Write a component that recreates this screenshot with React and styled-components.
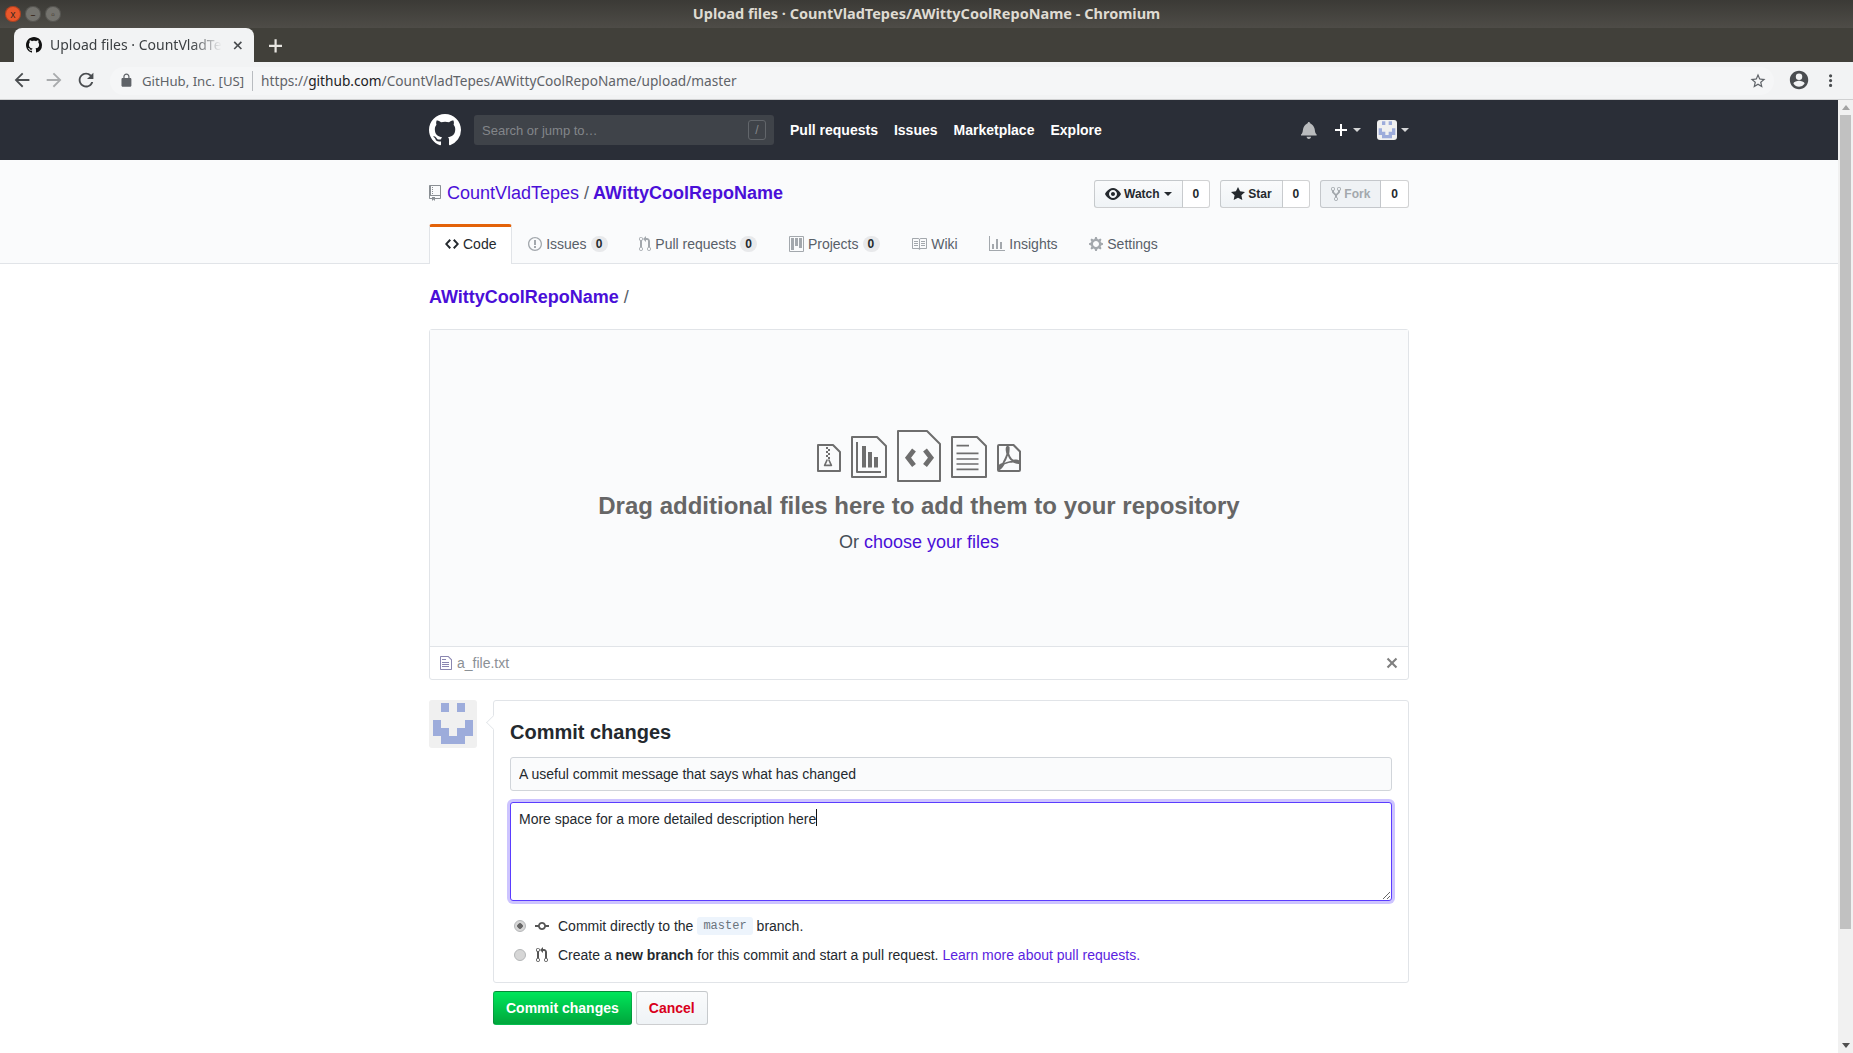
import React from "react";
import styled, { createGlobalStyle } from "styled-components";

const GlobalStyle = createGlobalStyle`
  html, body {
    margin: 0;
    height: 100%;
    overflow: hidden;
    background: #fff;
  }
  * {
    box-sizing: border-box;
  }
`;

const UI_FONT = `"Liberation Sans", Arial, sans-serif`;
const SYSTEM_FONT = `"Noto Sans", Roboto, sans-serif`;
const LINK = "#4a0fd8";

const paths = {
  mark: "M8 0C3.58 0 0 3.58 0 8c0 3.54 2.29 6.53 5.47 7.59.4.07.55-.17.55-.38 0-.19-.01-.82-.01-1.49-2.01.37-2.53-.49-2.69-.94-.09-.23-.48-.94-.82-1.13-.28-.15-.68-.52-.01-.53.63-.01 1.08.58 1.23.82.72 1.21 1.87.87 2.33.66.07-.52.28-.87.51-1.07-1.78-.2-3.64-.89-3.64-3.95 0-.87.31-1.59.82-2.15-.08-.2-.36-1.02.08-2.12 0 0 .67-.21 2.2.82.64-.18 1.32-.27 2-.27.68 0 1.36.09 2 .27 1.53-1.04 2.2-.82 2.2-.82.44 1.1.16 1.92.08 2.12.51.56.82 1.27.82 2.15 0 3.07-1.87 3.75-3.65 3.95.29.25.54.73.54 1.48 0 1.07-.01 1.93-.01 2.2 0 .21.15.46.55.38A8.013 8.013 0 0016 8c0-4.42-3.58-8-8-8z",
  repo: "M4 9H3V8h1v1zm0-3H3v1h1V6zm0-2H3v1h1V4zm0-2H3v1h1V2zm8-1v12c0 .55-.45 1-1 1H6v2l-1.5-1.5L3 16v-2H1c-.55 0-1-.45-1-1V1c0-.55.45-1 1-1h10c.55 0 1 .45 1 1zm-1 10H1v2h2v-1h3v1h5v-2zm0-10H2v9h9V1z",
  code: "M9.5 3L8 4.5 11.5 8 8 11.5 9.5 13 14 8 9.5 3zm-5 0L0 8l4.5 5L6 11.5 2.5 8 6 4.5 4.5 3z",
  issue: "M7 2.3c3.14 0 5.7 2.56 5.7 5.7s-2.56 5.7-5.7 5.7A5.71 5.71 0 011.3 8c0-3.14 2.56-5.7 5.7-5.7zM7 1C3.14 1 0 4.14 0 8s3.14 7 7 7 7-3.14 7-7-3.14-7-7-7zm1 3H6v5h2V4zm0 6H6v2h2v-2z",
  pull: "M11 11.28V5c-.03-.78-.34-1.47-.94-2.06C9.46 2.35 8.78 2.03 8 2H7V0L4 3l3 3V4h1c.27.02.48.11.69.31.21.2.3.42.31.69v6.28A1.993 1.993 0 0010 15a1.993 1.993 0 001-3.72zm-1 2.92c-.66 0-1.2-.55-1.2-1.2 0-.65.55-1.2 1.2-1.2.65 0 1.2.55 1.2 1.2 0 .65-.55 1.2-1.2 1.2zM4 3c0-1.11-.89-2-2-2a1.993 1.993 0 00-1 3.72v6.56A1.993 1.993 0 002 15a1.993 1.993 0 001-3.72V4.72c.59-.34 1-.98 1-1.72zm-.8 10c0 .66-.55 1.2-1.2 1.2-.65 0-1.2-.55-1.2-1.2 0-.65.55-1.2 1.2-1.2.65 0 1.2.55 1.2 1.2zM2 4.2C1.34 4.2.8 3.65.8 3c0-.65.55-1.2 1.2-1.2.65 0 1.2.55 1.2 1.2 0 .65-.55 1.2-1.2 1.2z",
  project: "M10 12h3V2h-3v10zm-4-2h3V2H6v8zm-4 4h3V2H2v12zm-1 1h13V1H1v14zM14 0H1a1 1 0 00-1 1v14a1 1 0 001 1h13a1 1 0 001-1V1a1 1 0 00-1-1z",
  book: "M3 5h4v1H3V5zm0 3h4V7H3v1zm0 2h4V9H3v1zm11-5h-4v1h4V5zm0 2h-4v1h4V7zm0 2h-4v1h4V9zm2-6v9c0 .55-.45 1-1 1H9.5l-1 1-1-1H2c-.55 0-1-.45-1-1V3c0-.55.45-1 1-1h5.5l1 1 1-1H15c.55 0 1 .45 1 1zm-8 .5L7.5 3H2v9h6V3.5zm7-.5H9.5l-.5.5V12h6V3z",
  graph: "M16 14v1H0V0h1v14h15zM5 13H3V8h2v5zm4 0H7V3h2v10zm4 0h-2V6h2v7z",
  gear: "M14 8.77v-1.6l-1.94-.64-.45-1.09.88-1.84-1.13-1.13-1.81.91-1.09-.45-.69-1.92h-1.6l-.63 1.94-1.11.45-1.84-.88-1.13 1.13.91 1.81-.45 1.09L0 7.23v1.59l1.94.64.45 1.09-.88 1.84 1.13 1.13 1.81-.91 1.09.45.69 1.92h1.59l.63-1.94 1.11-.45 1.84.88 1.13-1.13-.92-1.81.47-1.09L14 8.75v.02zM7 11c-1.66 0-3-1.34-3-3s1.34-3 3-3 3 1.34 3 3-1.34 3-3 3z",
  eye: "M8.06 2C3 2 0 8 0 8s3 6 8.06 6C13 14 16 8 16 8s-3-6-7.94-6zM8 12c-2.2 0-4-1.78-4-4 0-2.2 1.8-4 4-4 2.22 0 4 1.8 4 4 0 2.22-1.78 4-4 4zm2-4c0 1.11-.89 2-2 2-1.11 0-2-.89-2-2 0-1.11.89-2 2-2 1.11 0 2 .89 2 2z",
  star: "M14 6l-4.9-.64L7 1 4.9 5.36 0 6l3.6 3.26L2.67 14 7 11.67 11.33 14l-.93-4.74L14 6z",
  fork: "M8 1a1.993 1.993 0 00-1 3.72V6L5 8 3 6V4.72A1.993 1.993 0 002 1a1.993 1.993 0 00-1 3.72V6.5l3 3v1.78A1.993 1.993 0 005 15a1.993 1.993 0 001-3.72V9.5l3-3V4.72A1.993 1.993 0 008 1zM2 4.2C1.34 4.2.8 3.65.8 3c0-.65.55-1.2 1.2-1.2.65 0 1.2.55 1.2 1.2 0 .65-.55 1.2-1.2 1.2zm3 10c-.66 0-1.2-.55-1.2-1.2 0-.65.55-1.2 1.2-1.2.65 0 1.2.55 1.2 1.2 0 .65-.55 1.2-1.2 1.2zm3-10c-.66 0-1.2-.55-1.2-1.2 0-.65.55-1.2 1.2-1.2.65 0 1.2.55 1.2 1.2 0 .65-.55 1.2-1.2 1.2z",
  bell: "M13.99 11.991v1H0v-1l.73-.58c.769-.769.809-2.547 1.189-4.416.77-3.767 4.077-4.996 4.077-4.996 0-.55.45-1 1-1s1 .45 1 1c0 0 3.387 1.229 4.156 4.996.38 1.879.42 3.657 1.19 4.417l.659.58h-.01zM6.995 15.99c1.11 0 1.999-.89 1.999-2H4.996c0 1.11.89 2 1.999 2z",
  plus: "M12 9H7v5H5V9H0V7h5V2h2v5h5v2z",
  x: "M7.48 8l3.75 3.75-1.48 1.48L6 9.48l-3.75 3.75-1.48-1.48L4.52 8 .77 4.25l1.48-1.48L6 6.52l3.75-3.75 1.48 1.48L7.48 8z",
  file: "M6 5H2V4h4v1zM2 8h7V7H2v1zm0 2h7V9H2v1zm0 2h7v-1H2v1zm10-7.5V14c0 .55-.45 1-1 1H1c-.55 0-1-.45-1-1V2c0-.55.45-1 1-1h7.5L12 4.5zM11 5L8 2H1v12h10V5z",
  filePdf: "M8.5 1H1a1 1 0 00-1 1v12a1 1 0 001 1h10a1 1 0 001-1V4.5L8.5 1zM1 2h4a.68.68 0 00-.31.2 1.08 1.08 0 00-.23.47 4.22 4.22 0 00-.09 1.47c.06.609.173 1.211.34 1.8A21.78 21.78 0 013.6 8.6c-.5 1-.8 1.66-.91 1.84a7.16 7.16 0 00-.69.3c-.362.165-.699.38-1 .64V2zm4.42 4.8a5.65 5.65 0 001.17 2.09c.275.237.595.417.94.53-.64.09-1.23.2-1.81.33-.618.15-1.223.347-1.81.59s.22-.44.61-1.25c.365-.74.67-1.51.91-2.3l-.01.01zM11 14H1.5a.743.743 0 01-.17 0 2.12 2.12 0 00.73-.44 10.14 10.14 0 001.78-2.38c.31-.13.58-.23.81-.31l.42-.14c.45-.13.94-.23 1.44-.33s1-.16 1.48-.2c.447.216.912.394 1.39.53.403.11.814.188 1.23.23h.38V14H11zm0-4.86a3.743 3.743 0 00-.64-.28 4.221 4.221 0 00-.75-.11c-.411.003-.822.03-1.23.08a3 3 0 01-1-.64 6.07 6.07 0 01-1.29-2.33c.111-.661.178-1.33.2-2 .02-.25.02-.5 0-.75a1.05 1.05 0 00-.2-.88.82.82 0 00-.61-.23H8l3 3v4.14z",
  commit: "M10.86 7c-.45-1.72-2-3-3.86-3-1.86 0-3.41 1.28-3.86 3H0v2h3.14c.45 1.72 2 3 3.86 3 1.86 0 3.41-1.28 3.86-3H14V7h-3.14zM7 10.2c-1.22 0-2.2-.98-2.2-2.2 0-1.22.98-2.2 2.2-2.2 1.22 0 2.2.98 2.2 2.2 0 1.22-.98 2.2-2.2 2.2z",
  back: "M20 11H7.83l5.59-5.59L12 4l-8 8 8 8 1.41-1.41L7.83 13H20v-2z",
  forward: "M12 4l-1.41 1.41L16.17 11H4v2h12.17l-5.58 5.59L12 20l8-8z",
  reload: "M17.65 6.35A7.958 7.958 0 0012 4c-4.42 0-7.99 3.58-7.99 8s3.57 8 7.99 8c3.73 0 6.84-2.55 7.73-6h-2.08A5.99 5.99 0 0112 18c-3.31 0-6-2.69-6-6s2.69-6 6-6c1.66 0 3.14.69 4.22 1.78L13 11h7V4l-2.35 2.35z",
  lock: "M18 8h-1V6c0-2.76-2.24-5-5-5S7 3.24 7 6v2H6c-1.1 0-2 .9-2 2v10c0 1.1.9 2 2 2h12c1.1 0 2-.9 2-2V10c0-1.1-.9-2-2-2zM9 6c0-1.66 1.34-3 3-3s3 1.34 3 3v2H9V6z",
  bookmark: "M22 9.24l-7.19-.62L12 2 9.19 8.63 2 9.24l5.46 4.73L5.82 21 12 17.27 18.18 21l-1.63-7.03L22 9.24zM12 15.4l-3.76 2.27 1-4.28-3.32-2.88 4.38-.38L12 6.1l1.71 4.04 4.38.38-3.32 2.88 1 4.28L12 15.4z",
  profile: "M12 2C6.48 2 2 6.48 2 12s4.48 10 10 10 10-4.48 10-10S17.52 2 12 2zm0 3a3.5 3.5 0 110 7 3.5 3.5 0 010-7zm0 14.2a7.2 7.2 0 01-6-3.22c.03-1.99 4-3.08 6-3.08s5.97 1.09 6 3.08a7.2 7.2 0 01-6 3.22z",
  dots: "M12 8a2 2 0 100-4 2 2 0 000 4zm0 2a2 2 0 100 4 2 2 0 000-4zm0 6a2 2 0 100 4 2 2 0 000-4z",
};

const Svg = styled.svg`
  display: block;
  flex: none;
  fill: ${props => props.$color || "currentColor"};
`;

// octicons are 16 high, w is the viewbox width, scale blows them up
const Octicon = ({ d, w = 16, h = 16, scale = 1, color }) => (
  <Svg viewBox={`0 0 ${w} ${h}`} width={w * scale} height={h * scale} $color={color}>
    <path fillRule="evenodd" d={d} />
  </Svg>
);

// the big file pictures in the drop zone keep a 2px line whatever their size
const Glyph = styled.svg`
  display: block;
  flex: none;
  fill: none;
  stroke: #6e6e6e;
  stroke-width: 2;
  stroke-linejoin: round;
`;

const GlyphFill = styled.path`
  fill: #6e6e6e;
  stroke: none;
`;

const ZipGlyph = () => (
  <Glyph width="24" height="32" viewBox="0 0 24 32">
    <path d="M1 5H16L23 12V31H1Z" />
    <GlyphFill d="M9 7h2v2H9zM11 9h2v2h-2zM9 11h2v2H9zM11 13h2v2h-2zM9 15h2v2H9zM11 17h2v2h-2z" />
    <path d="M10.3 19.5L7.6 25.4H14.4L11.7 19.5" strokeWidth="1.6" />
  </Glyph>
);

const FILE_OUTLINE = "M1 3H26L35 12V43H1Z";

const ChartGlyph = () => (
  <Glyph width="36" height="44" viewBox="0 0 36 44">
    <path d={FILE_OUTLINE} />
    <path d="M6 8V38H30" />
    <GlyphFill d="M11 12h4v21.5h-4zM17 18h4v15.5h-4zM23 23h4v10.5h-4z" />
  </Glyph>
);

const CodeGlyph = () => (
  <Glyph width="44" height="52" viewBox="0 0 44 52">
    <path d="M1 1H30L43 14V51H1Z" />
    <path d="M17 20L11 27.7L17 35.5M28 20L34 27.7L28 35.5" strokeWidth="4.8" strokeLinejoin="miter" />
  </Glyph>
);

const TextGlyph = () => (
  <Glyph width="36" height="44" viewBox="0 0 36 44">
    <path d={FILE_OUTLINE} />
    <path d="M5.5 11.7H18M5.5 19.3H27.5M5.5 25H27.5M5.5 30H27.5M5.5 35.3H27.5" strokeWidth="1.7" />
  </Glyph>
);

const PdfGlyph = () => (
  <Svg viewBox="0 -1 12 16" width="24" height="32" $color="#6e6e6e">
    <path fillRule="evenodd" d={paths.filePdf} />
  </Svg>
);

const Page = styled.div`
  height: 1053px;
  display: flex;
  flex-direction: column;
  font-family: ${UI_FONT};
  font-size: 14px;
  color: #24292e;
`;

/* window chrome */
const TitleBar = styled.div`
  height: 28px;
  flex: none;
  position: relative;
  display: flex;
  align-items: center;
  justify-content: center;
  padding-bottom: 2px;
  background: linear-gradient(#3b3a36, #4e4c47);
  color: #dfdbd2;
  font-family: ${SYSTEM_FONT};
  font-size: 14.5px;
  font-weight: 700;
`;

const WindowButtons = styled.div`
  position: absolute;
  left: 5px;
  top: 6px;
  display: flex;
  gap: 4px;
`;

const WindowButton = styled.div`
  width: 16px;
  height: 16px;
  border-radius: 50%;
  background: ${props => props.$bg};
  box-shadow: inset 0 0 0 1px rgba(0, 0, 0, 0.25);
  color: #3b2a20;
  font-size: 10px;
  font-weight: 400;
  line-height: 16px;
  text-align: center;
`;

const TabStrip = styled.div`
  height: 34px;
  flex: none;
  display: flex;
  align-items: flex-end;
  background: #41403a;
  padding-left: 14px;
`;

const BrowserTab = styled.div`
  width: 240px;
  height: 34px;
  background: #f2f3f4;
  border-radius: 8px 8px 0 0;
  display: flex;
  align-items: center;
  padding: 0 11px 0 12px;
  color: #3c4043;
  font-family: ${SYSTEM_FONT};
  font-size: 14px;
`;

const TabTitle = styled.div`
  flex: 1;
  margin-left: 8px;
  padding-bottom: 1px;
  overflow: hidden;
  white-space: nowrap;
  mask-image: linear-gradient(90deg, #000 80%, transparent 97%);
`;

const TabClose = styled.div`
  margin-left: 6px;
  color: #4a4d50;
`;

const NewTab = styled.div`
  margin: 0 0 7px 15px;
  color: #e8e6e1;
`;

const Toolbar = styled.div`
  height: 38px;
  flex: none;
  display: flex;
  align-items: center;
  padding-left: 6px;
  background: #f2f3f4;
  border-bottom: 1px solid #cfd0d1;
`;

const ToolButton = styled.div`
  width: 32px;
  height: 32px;
  flex: none;
  display: flex;
  align-items: center;
  justify-content: center;
  margin-left: ${props => (props.$end ? "auto" : "0")};
`;

const Omnibox = styled.div`
  flex: 1;
  height: 28px;
  margin: 0 9px 0 8px;
  border-radius: 14px;
  background: #f5f6f7;
  display: flex;
  align-items: center;
  padding-left: 9px;
  font-family: ${SYSTEM_FONT};
  font-size: 13.67px;
  color: #5f6368;
`;

const SiteChip = styled.div`
  display: flex;
  align-items: center;
  gap: 8px;
  padding-right: 8px;
  margin-right: 8px;
  border-right: 1px solid #b9bcc0;
  font-size: 13.2px;
  line-height: 20px;
`;

const Host = styled.span`
  color: #202124;
`;

const ToolbarRight = styled.div`
  display: flex;
  margin-right: 6px;
`;

/* page with scrollbar */
const Viewport = styled.div`
  flex: 1;
  min-height: 0;
  display: flex;
`;

const PageScroll = styled.div`
  flex: 1;
  min-width: 0;
  overflow: hidden;
`;

const Scrollbar = styled.div`
  width: 15px;
  flex: none;
  background: #f1f1f1;
  display: flex;
  flex-direction: column;
  align-items: center;
  padding: 5px 2px 5px;
`;

const ScrollArrow = styled.div`
  width: 0;
  height: 0;
  border-left: 4px solid transparent;
  border-right: 4px solid transparent;
  ${props => props.$down ? "border-top: 5px solid #505050;" : "border-bottom: 5px solid #a3a3a3;"}
`;

const ScrollThumb = styled.div`
  width: 11px;
  height: 814px;
  margin-top: 5px;
  background: #c1c1c1;
`;

const ScrollSpacer = styled.div`
  flex: 1;
`;

const Container = styled.div`
  width: 980px;
  margin: 0 auto;
`;

/* github header */
const Header = styled.header`
  height: 60px;
  background: #2a2e37;
  color: #fff;
`;

const HeaderInner = styled(Container)`
  height: 100%;
  display: flex;
  align-items: center;
`;

const SearchBox = styled.div`
  width: 300px;
  height: 30px;
  margin: 0 16px 0 13px;
  padding: 0 8px;
  display: flex;
  align-items: center;
  justify-content: space-between;
  background: #3f4349;
  border-radius: 3px;
  color: #83868a;
  font-size: 13px;
`;

const SlashKey = styled.div`
  width: 18px;
  height: 20px;
  border: 1px solid #62666b;
  border-radius: 3px;
  text-align: center;
  line-height: 18px;
  font-size: 12px;
  color: #85888c;
`;

const NavLink = styled.a`
  margin-right: 16px;
  font-weight: 700;
  color: #fff;
`;

const HeaderActions = styled.div`
  margin-left: auto;
  display: flex;
  align-items: center;
`;

const BellWrap = styled.div`
  margin-right: 18px;
`;

const PlusWrap = styled.div`
  display: flex;
  align-items: center;
  margin-right: 16px;
`;

const Caret = styled.span`
  width: 0;
  height: 0;
  margin-left: ${props => props.$gap || 4}px;
  border-left: 4px solid transparent;
  border-right: 4px solid transparent;
  border-top: 4px solid ${props => props.$color || "currentColor"};
`;

const MiniAvatar = styled.div`
  width: 20px;
  height: 20px;
  border-radius: 3px;
  background: #f0f0f0;
  overflow: hidden;
`;

/* repo head */
const RepoHead = styled.div`
  height: 104px;
  padding-top: 20px;
  background: #fafbfc;
  border-bottom: 1px solid #e1e4e8;
`;

const RepoTitleRow = styled.div`
  display: flex;
  align-items: center;
  height: 28px;
  margin-bottom: 16px;
`;

const RepoTitle = styled.h1`
  flex: 1;
  margin: 0;
  padding-bottom: 2px;
  display: flex;
  align-items: center;
  font-size: 18px;
  font-weight: 400;
  color: #586069;
`;

const TitleLink = styled.a`
  color: ${LINK};
  font-weight: ${props => (props.$bold ? 700 : 400)};
  margin-left: ${props => props.$ml || 0}px;
`;

const Separator = styled.span`
  margin: 0 4px 0 5px;
`;

const ActionGroup = styled.div`
  display: flex;
  margin-left: 10px;
  height: 28px;
  font-size: 12px;
  font-weight: 700;
`;

const ActionButton = styled.div`
  display: flex;
  align-items: center;
  gap: 3px;
  padding: 0 10px;
  border: 1px solid rgba(27, 31, 35, 0.2);
  border-radius: 3px 0 0 3px;
  background: ${props => (props.$disabled ? "#eff2f5" : "linear-gradient(#fafbfc, #eff3f6)")};
  color: ${props => (props.$disabled ? "#a3a8ad" : "#24292e")};
`;

const ActionCount = styled.div`
  display: flex;
  align-items: center;
  padding: 0 10px;
  background: #fff;
  border: 1px solid rgba(27, 31, 35, 0.2);
  border-left: 0;
  border-radius: 0 3px 3px 0;
`;

const RepoNav = styled.nav`
  display: flex;
`;

const NavTab = styled.a`
  height: 40px;
  padding: 0 14.7px 4px 15px;
  display: flex;
  align-items: center;
  gap: 4px;
  color: ${props => (props.$active ? "#24292e" : "#586069")};
  background: ${props => (props.$active ? "#fff" : "transparent")};
  border: 1px solid ${props => (props.$active ? "#e1e4e8" : "transparent")};
  border-bottom: 0;
  border-top: 3px solid ${props => (props.$active ? "#e36209" : "transparent")};
  border-radius: 3px 3px 0 0;
`;

const Counter = styled.span`
  min-width: 17px;
  padding: 2px 5px;
  border-radius: 20px;
  background: rgba(27, 31, 35, 0.08);
  color: #24292e;
  font-size: 12px;
  font-weight: 700;
  line-height: 1;
`;

/* upload */
const Breadcrumb = styled.div`
  margin: 21px 0 19px;
  font-size: 18px;
  line-height: 25px;
  color: #586069;
  height: 25px;
`;

const UploadBox = styled.div`
  border: 1px solid #e1e4e8;
  border-radius: 3px;
`;

const DropZone = styled.div`
  height: 317px;
  padding-top: 100px;
  background: #fafbfc;
  border-bottom: 1px solid #e1e4e8;
  display: flex;
  flex-direction: column;
  align-items: center;
  color: #586069;
`;

const DropIcons = styled.div`
  height: 52px;
  display: flex;
  align-items: center;
  gap: 10px;
`;

const DropTitle = styled.div`
  margin-top: 8px;
  font-size: 24px;
  line-height: 32px;
  font-weight: 700;
  color: #666;
`;

const DropHint = styled.div`
  margin-top: 8px;
  font-size: 18px;
  line-height: 25px;
  color: #444d56;
`;

const PlainLink = styled.a`
  color: ${props => props.$color || LINK};
`;

const FileRow = styled.div`
  height: 32px;
  padding: 0 10px;
  display: flex;
  align-items: center;
  gap: 5px;
  color: #8b9095;
`;

const FileName = styled.span`
  flex: 1;
`;

/* commit form */
const CommitArea = styled.div`
  margin-top: 20px;
  display: flex;
  gap: 16px;
`;

const Avatar = styled.div`
  width: 48px;
  height: 48px;
  flex: none;
  border-radius: 3px;
  overflow: hidden;
  background: #f0f0f0;
`;

const CommitColumn = styled.div`
  flex: 1;
`;

const CommitForm = styled.div`
  position: relative;
  height: 283px;
  padding: 16px;
  border: 1px solid #e1e4e8;
  border-radius: 3px;
  background: #fff;

  &:before {
    content: "";
    position: absolute;
    left: -7px;
    top: 15px;
    width: 12px;
    height: 12px;
    background: #fff;
    border-left: 1px solid #e1e4e8;
    border-bottom: 1px solid #e1e4e8;
    transform: rotate(45deg) scale(0.8);
  }
`;

const CommitTitle = styled.h3`
  margin: 0 0 10px;
  font-size: 20px;
  line-height: 30px;
  font-weight: 700;
`;

const MessageInput = styled.input`
  display: block;
  width: 100%;
  height: 34px;
  padding: 0 8px;
  border: 1px solid #d1d5da;
  border-radius: 3px;
  background: #fafbfc;
  font: 14px ${UI_FONT};
  color: #24292e;
  outline: none;
`;

const DescriptionWrap = styled.div`
  position: relative;
  margin-top: 11px;
`;

const Description = styled.textarea`
  display: block;
  width: 100%;
  height: 99px;
  padding: 6px 8px;
  border: 1px solid #5b3cff;
  border-radius: 3px;
  background: #fff;
  box-shadow: 0 0 0 3px rgba(91, 60, 255, 0.3);
  font: 14px/20px ${UI_FONT};
  color: #24292e;
  outline: none;
  resize: vertical;
`;

const TextCaret = styled.span`
  position: absolute;
  left: 306px;
  top: 7px;
  width: 1px;
  height: 17px;
  background: #111;
`;

const ChoiceList = styled.div`
  margin-top: 15px;
  display: flex;
  flex-direction: column;
  gap: 9px;
`;

const Choice = styled.div`
  height: 20px;
  padding-left: 4px;
  display: flex;
  align-items: center;
  color: #24292e;
`;

const Radio = styled.span`
  width: 12px;
  height: 12px;
  flex: none;
  margin-right: 9px;
  border-radius: 50%;
  border: 1px solid #b4b6b8;
  background: ${props => (props.$checked ? "radial-gradient(circle, #666 0 2.5px, #d6d6d6 3px)" : "#d6d6d6")};
`;

const ChoiceIcon = styled.span`
  width: 14px;
  margin-right: 9px;
  color: #555;
  display: flex;
  justify-content: center;
`;

const Branch = styled.code`
  margin: 0 4px;
  height: 18px;
  padding: 0 6px;
  border-radius: 3px;
  background: #edf4fc;
  color: #6a737d;
  font: 12px/18px "Liberation Mono", monospace;
`;

const Spaced = styled.span`
  white-space: pre;
`;

const FormButtons = styled.div`
  margin-top: 8px;
  display: flex;
  gap: 4px;
`;

const Button = styled.div`
  height: 34px;
  padding: 0 12px;
  display: flex;
  align-items: center;
  border-radius: 3px;
  border: 1px solid rgba(27, 31, 35, 0.2);
  font-weight: 700;
  background: ${props => (props.$primary ? "linear-gradient(#00e65a, #00a63c)" : "linear-gradient(#fafbfc, #eff3f6)")};
  color: ${props => (props.$primary ? "#fff" : "#d9001b")};
`;

const Identicon = () => (
  <Svg viewBox="0 0 48 48" width="100%" height="100%" $color="#9dacdb">
    <path d="M12 3h8v9h-8zM28 3h8v9h-8zM4 20h8v8H4zM36 20h8v8h-8zM4 28h16v8H4zM28 28h16v8H28zM12 36h24v8H12z" />
  </Svg>
);

const tabs = [
  { label: "Code", icon: paths.code, w: 14, active: true },
  { label: "Issues", icon: paths.issue, w: 14, count: 0 },
  { label: "Pull requests", icon: paths.pull, w: 12, count: 0 },
  { label: "Projects", icon: paths.project, w: 15, count: 0 },
  { label: "Wiki", icon: paths.book, w: 16 },
  { label: "Insights", icon: paths.graph, w: 16 },
  { label: "Settings", icon: paths.gear, w: 14 },
];

export default function App() {
  return (
    <Page>
      <GlobalStyle />
      <TitleBar>
        <WindowButtons>
          <WindowButton $bg="#e9572b">x</WindowButton>
          <WindowButton $bg="#74736e">–</WindowButton>
          <WindowButton $bg="#74736e">▫</WindowButton>
        </WindowButtons>
        Upload files · CountVladTepes/AWittyCoolRepoName - Chromium
      </TitleBar>
      <TabStrip>
        <BrowserTab>
          <Octicon d={paths.mark} color="#111" />
          <TabTitle>Upload files · CountVladTepes/AWittyCoolRepoName</TabTitle>
          <TabClose>
            <Octicon d={paths.x} w={12} scale={0.8} />
          </TabClose>
        </BrowserTab>
        <NewTab>
          <Octicon d={paths.plus} w={12} scale={1.1} />
        </NewTab>
      </TabStrip>
      <Toolbar>
        <ToolButton><Octicon d={paths.back} w={24} h={24} scale={0.92} color="#4a4d50" /></ToolButton>
        <ToolButton><Octicon d={paths.forward} w={24} h={24} scale={0.92} color="#a9abad" /></ToolButton>
        <ToolButton><Octicon d={paths.reload} w={24} h={24} scale={0.92} color="#4a4d50" /></ToolButton>
        <Omnibox>
          <SiteChip>
            <Octicon d={paths.lock} w={24} h={24} scale={0.62} color="#5f6368" />
            GitHub, Inc. [US]
          </SiteChip>
          https://<Host>github.com</Host>/CountVladTepes/AWittyCoolRepoName/upload/master
          <ToolButton $end><Octicon d={paths.bookmark} w={24} h={24} scale={0.75} color="#5f6368" /></ToolButton>
        </Omnibox>
        <ToolbarRight>
          <ToolButton><Octicon d={paths.profile} w={24} h={24} scale={0.92} color="#4a4d50" /></ToolButton>
          <ToolButton><Octicon d={paths.dots} w={24} h={24} scale={0.8} color="#4a4d50" /></ToolButton>
        </ToolbarRight>
      </Toolbar>

      <Viewport>
        <PageScroll>
          <Header>
            <HeaderInner>
              <Octicon d={paths.mark} scale={2} color="#fff" />
              <SearchBox>
                Search or jump to…
                <SlashKey>/</SlashKey>
              </SearchBox>
              <NavLink>Pull requests</NavLink>
              <NavLink>Issues</NavLink>
              <NavLink>Marketplace</NavLink>
              <NavLink>Explore</NavLink>
              <HeaderActions>
                <BellWrap><Octicon d={paths.bell} w={14} scale={1.12} color="#b9bbbd" /></BellWrap>
                <PlusWrap>
                  <Octicon d={paths.plus} w={12} color="#fff" />
                  <Caret $gap={6} $color="#d5d6d7" />
                </PlusWrap>
                <MiniAvatar><Identicon /></MiniAvatar>
                <Caret $gap={4} $color="#d5d6d7" />
              </HeaderActions>
            </HeaderInner>
          </Header>

          <RepoHead>
            <Container>
              <RepoTitleRow>
                <RepoTitle>
                  <Octicon d={paths.repo} w={12} color="#8a8f94" />
                  <TitleLink $ml={6}>CountVladTepes</TitleLink>
                  <Separator>/</Separator>
                  <TitleLink $bold>AWittyCoolRepoName</TitleLink>
                </RepoTitle>
                <ActionGroup>
                  <ActionButton>
                    <Octicon d={paths.eye} />
                    Watch
                    <Caret $gap={1} />
                  </ActionButton>
                  <ActionCount>0</ActionCount>
                </ActionGroup>
                <ActionGroup>
                  <ActionButton>
                    <Octicon d={paths.star} w={14} />
                    Star
                  </ActionButton>
                  <ActionCount>0</ActionCount>
                </ActionGroup>
                <ActionGroup>
                  <ActionButton $disabled>
                    <Octicon d={paths.fork} w={10} />
                    Fork
                  </ActionButton>
                  <ActionCount>0</ActionCount>
                </ActionGroup>
              </RepoTitleRow>
              <RepoNav>
                {tabs.map(tab => (
                  <NavTab key={tab.label} $active={tab.active}>
                    <Octicon d={tab.icon} w={tab.w} color={tab.active ? "#24292e" : "#a3a8ad"} />
                    {tab.label}
                    {tab.count !== undefined && <Counter>{tab.count}</Counter>}
                  </NavTab>
                ))}
              </RepoNav>
            </Container>
          </RepoHead>

          <Container>
            <Breadcrumb>
              <TitleLink $bold>AWittyCoolRepoName</TitleLink> /
            </Breadcrumb>
            <UploadBox>
              <DropZone>
                <DropIcons>
                  <ZipGlyph />
                  <ChartGlyph />
                  <CodeGlyph />
                  <TextGlyph />
                  <PdfGlyph />
                </DropIcons>
                <DropTitle>Drag additional files here to add them to your repository</DropTitle>
                <DropHint>Or <PlainLink>choose your files</PlainLink></DropHint>
              </DropZone>
              <FileRow>
                <Octicon d={paths.file} w={12} color="#8a86b0" />
                <FileName>a_file.txt</FileName>
                <Octicon d={paths.x} w={12} color="#7f7f7f" />
              </FileRow>
            </UploadBox>

            <CommitArea>
              <Avatar><Identicon /></Avatar>
              <CommitColumn>
                <CommitForm>
                  <CommitTitle>Commit changes</CommitTitle>
                  <MessageInput readOnly value="A useful commit message that says what has changed" />
                  <DescriptionWrap>
                    <Description readOnly value="More space for a more detailed description here" />
                    <TextCaret />
                  </DescriptionWrap>
                  <ChoiceList>
                    <Choice>
                      <Radio $checked />
                      <ChoiceIcon><Octicon d={paths.commit} w={14} /></ChoiceIcon>
                      Commit directly to the <Branch>master</Branch> branch.
                    </Choice>
                    <Choice>
                      <Radio />
                      <ChoiceIcon><Octicon d={paths.pull} w={12} /></ChoiceIcon>
                      <Spaced>Create a <b>new branch</b> for this commit and start a pull request. </Spaced>
                      <PlainLink $color="#5a1ee0">Learn more about pull requests.</PlainLink>
                    </Choice>
                  </ChoiceList>
                </CommitForm>
                <FormButtons>
                  <Button $primary>Commit changes</Button>
                  <Button>Cancel</Button>
                </FormButtons>
              </CommitColumn>
            </CommitArea>
          </Container>
        </PageScroll>
        <Scrollbar>
          <ScrollArrow />
          <ScrollThumb />
          <ScrollSpacer />
          <ScrollArrow $down />
        </Scrollbar>
      </Viewport>
    </Page>
  );
}
